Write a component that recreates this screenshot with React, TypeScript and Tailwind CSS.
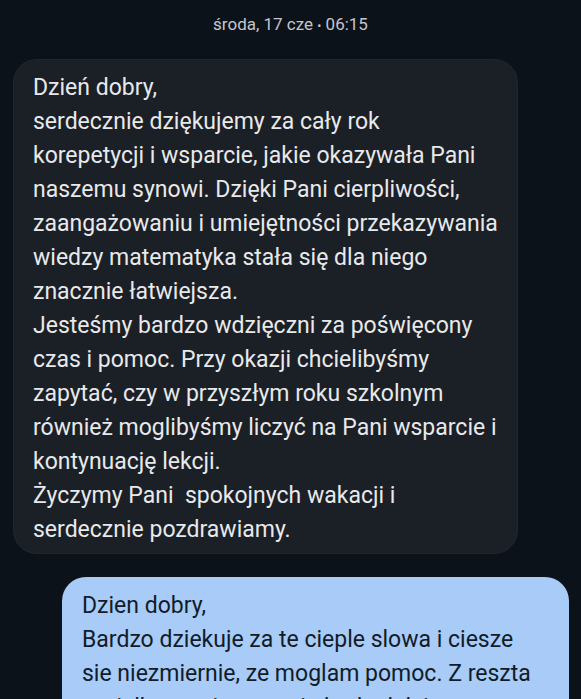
const incoming = [
  "Dzień dobry,",
  "serdecznie dziękujemy za cały rok",
  "korepetycji i wsparcie, jakie okazywała Pani",
  "naszemu synowi. Dzięki Pani cierpliwości,",
  "zaangażowaniu i umiejętności przekazywania",
  "wiedzy matematyka stała się dla niego",
  "znacznie łatwiejsza.",
  "Jesteśmy bardzo wdzięczni za poświęcony",
  "czas i pomoc. Przy okazji chcielibyśmy",
  "zapytać, czy w przyszłym roku szkolnym",
  "również moglibyśmy liczyć na Pani wsparcie i",
  "kontynuację lekcji.",
  "Życzymy Pani\u00a0 spokojnych wakacji i",
  "serdecznie pozdrawiamy.",
];

const outgoing = [
  "Dzien dobry,",
  "Bardzo dziekuje za te cieple slowa i ciesze",
  "sie niezmiernie, ze moglam pomoc. Z reszta",
  "z wielka przyjemnoscia bede dalej uczyc",
];

function Bubble({ lines, mine }: { lines: string[]; mine?: boolean }) {
  return (
    <div
      className={
        mine
          ? "ml-[62px] mr-[12px] rounded-[24px] bg-[#a8cbf7] px-[20px] pb-[10px] pt-[12px] text-[#111c28]"
          : "ml-[13px] mr-[63px] rounded-[24px] border border-white/[0.03] bg-[#1b1f26] px-[19px] pb-[6px] pt-[11px] text-[#e8e9eb]"
      }
    >
      {lines.map((line, i) => (
        <div key={i} className="whitespace-nowrap text-[23px] leading-[34px]">
          {line}
        </div>
      ))}
    </div>
  );
}

export default function App() {
  return (
    <div
      className="h-[699px] overflow-hidden bg-[#0c121a]"
      style={{ fontFamily: "Roboto, 'Noto Sans', sans-serif" }}
    >
      <div className="pt-[13px] text-center text-[17px] leading-[22px] text-[#c3c6cb]">
        środa, 17 cze <span className="text-[12px]">•</span> 06:15
      </div>
      <div className="mt-[22px] flex flex-col gap-[23px]">
        <Bubble lines={incoming} />
        <Bubble lines={outgoing} mine />
      </div>
    </div>
  );
}
